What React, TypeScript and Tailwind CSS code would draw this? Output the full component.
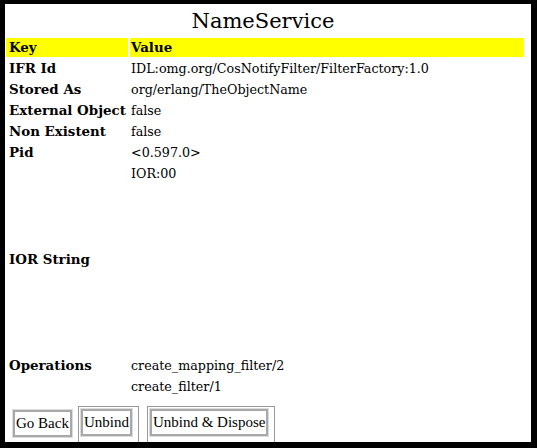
import React from "react";

const rows: { k: string; v: string }[] = [
  { k: "IFR Id", v: "IDL:omg.org/CosNotifyFilter/FilterFactory:1.0" },
  { k: "Stored As", v: "org/erlang/TheObjectName" },
  { k: "External Object", v: "false" },
  { k: "Non Existent", v: "false" },
  { k: "Pid", v: "<0.597.0>" },
];

function Btn({ label }: { label: string }) {
  return (
    <button className="h-[27px] whitespace-nowrap border-2 border-[#a8a8a8] bg-white px-[1px] font-['Liberation_Serif',serif] text-[15px] leading-none text-black outline outline-1 outline-[#dcdcdc]">
      {label}
    </button>
  );
}

export default function App() {
  return (
    <div className="h-[448px] w-[537px] bg-black pb-[6px] pl-[5px] pr-[6px] pt-[4px] font-['DejaVu_Serif',serif] text-black">
      <div className="h-full overflow-hidden bg-white">
        <h1 className="h-[34px] pr-[10px] pt-[4px] text-center text-[21px] leading-[26px]">
          NameService
        </h1>

        <div className="ml-[1px] grid w-[518px] grid-cols-[122px_1fr] gap-[2px] text-[12.7px] leading-[19px]">
          <div className="h-[19px] bg-[#ffff00] pl-[3px] text-[13.4px] font-bold">Key</div>
          <div className="h-[19px] bg-[#ffff00] pl-[1px] text-[13.4px] font-bold">Value</div>

          {rows.map((r) => (
            <React.Fragment key={r.k}>
              <div className="h-[19px] whitespace-nowrap pl-[3px] text-[13.4px] font-bold">{r.k}</div>
              <div className="h-[19px] pl-[1px]">{r.v}</div>
            </React.Fragment>
          ))}

          <div className="flex h-[190px] items-center pl-[3px] text-[13.4px] font-bold">IOR String</div>
          <div className="h-[190px] pl-[1px]">IOR:00</div>

          <div className="h-[19px] pl-[3px] text-[13.4px] font-bold">Operations</div>
          <div className="h-[19px] pl-[1px]">create_mapping_filter/2</div>
          <div className="h-[19px]" />
          <div className="h-[19px] pl-[1px]">create_filter/1</div>
        </div>

        <div className="mt-[10px] flex items-start pl-[8px]">
          <div className="pt-[4px]">
            <Btn label="Go Back" />
          </div>
          <div className="ml-[6px] h-[40px] border border-b-0 border-[#9a9a9a] pl-[2px] pr-[6px] pt-[2px]">
            <Btn label="Unbind" />
          </div>
          <div className="ml-[8px] h-[40px] border border-b-0 border-[#9a9a9a] pl-[2px] pr-[6px] pt-[2px]">
            <Btn label="Unbind & Dispose" />
          </div>
        </div>
      </div>
    </div>
  );
}
